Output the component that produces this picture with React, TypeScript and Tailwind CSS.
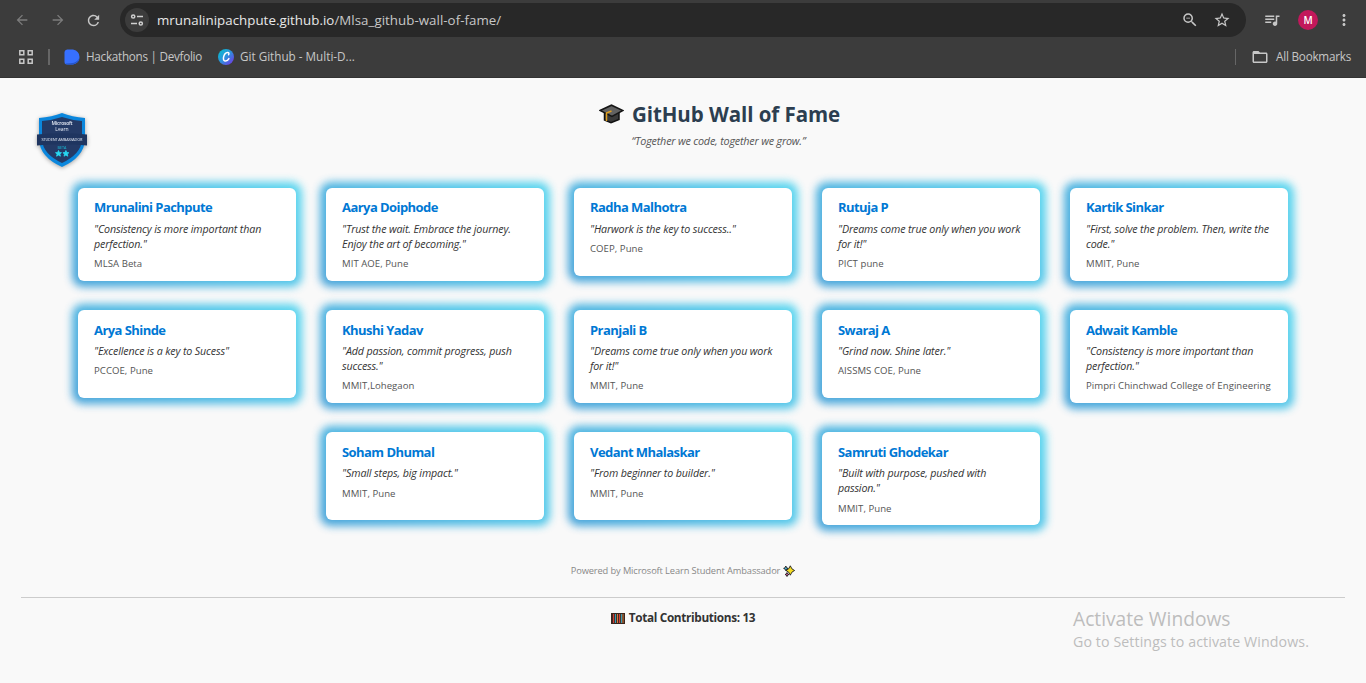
import { MdArrowBack, MdArrowForward, MdRefresh, MdZoomOut, MdStarBorder, MdQueueMusic, MdMoreVert, MdFolderOpen } from "react-icons/md";

type Member = { name: string; quote: string[]; school: string };

const rows: { pad: string; gap: string; schoolGap: string; members: Member[] }[] = [
  {
    pad: "pt-[9.5px]",
    gap: "mt-[6px]",
    schoolGap: "mt-[5px]",
    members: [
      { name: "Mrunalini Pachpute", quote: ['"Consistency is more important than', 'perfection."'], school: "MLSA Beta" },
      { name: "Aarya Doiphode", quote: ['"Trust the wait. Embrace the journey.', 'Enjoy the art of becoming."'], school: "MIT AOE, Pune" },
      { name: "Radha Malhotra", quote: ['"Harwork is the key to success.."'], school: "COEP, Pune" },
      { name: "Rutuja P", quote: ['"Dreams come true only when you work', 'for it!"'], school: "PICT pune" },
      { name: "Kartik Sinkar", quote: ['"First, solve the problem. Then, write the', 'code."'], school: "MMIT, Pune" },
    ],
  },
  {
    pad: "pt-[10.5px]",
    gap: "mt-[5px]",
    schoolGap: "mt-[5px]",
    members: [
      { name: "Arya Shinde", quote: ['"Excellence is a key to Sucess"'], school: "PCCOE, Pune" },
      { name: "Khushi Yadav", quote: ['"Add passion, commit progress, push', 'success."'], school: "MMIT,Lohegaon" },
      { name: "Pranjali B", quote: ['"Dreams come true only when you work', 'for it!"'], school: "MMIT, Pune" },
      { name: "Swaraj A", quote: ['"Grind now. Shine later."'], school: "AISSMS COE, Pune" },
      { name: "Adwait Kamble", quote: ['"Consistency is more important than', 'perfection."'], school: "Pimpri Chinchwad College of Engineering" },
    ],
  },
  {
    pad: "pt-[10.5px]",
    gap: "mt-[5px]",
    schoolGap: "mt-[6px]",
    members: [
      { name: "Soham Dhumal", quote: ['"Small steps, big impact."'], school: "MMIT, Pune" },
      { name: "Vedant Mhalaskar", quote: ['"From beginner to builder."'], school: "MMIT, Pune" },
      { name: "Samruti Ghodekar", quote: ['"Built with purpose, pushed with', 'passion."'], school: "MMIT, Pune" },
    ],
  },
];

function Card({ m, pad, gap, schoolGap }: { m: Member; pad: string; gap: string; schoolGap: string }) {
  const height = m.quote.length > 1 ? "h-[93px]" : "h-[88px]";
  return (
    <div className={`relative w-[218px] ${height}`}>
      <div className="absolute -inset-[6px] rounded-[11px] bg-linear-45 from-[#349ad6] to-[#48d3ef] opacity-90 blur-[4px]" />
      <div className={`relative rounded-md bg-white px-4 whitespace-nowrap ${height} ${pad}`}>
        <h3 className="text-[13px] leading-[18px] font-bold tracking-[-0.56px] text-[#0078d4]">{m.name}</h3>
        <div className={`text-[10.7px] leading-[15px] tracking-[-0.14px] text-[#333] italic ${gap}`}>
          {m.quote.map((q) => (
            <p key={q}>{q}</p>
          ))}
        </div>
        <p className={`text-[9.6px] leading-[14px] tracking-[0.04px] text-[#555] ${schoolGap}`}>{m.school}</p>
      </div>
    </div>
  );
}

function Badge() {
  return (
    <svg width="52" height="58" viewBox="0 0 52 58" className="drop-shadow-[0_1px_2px_rgba(0,0,0,.35)]">
      <path d="M3 6Q16 5 26 1Q36 5 49 6V28Q48 45 26 55Q4 45 3 28Z" fill="#0b87dd" />
      <path d="M6 9Q17 8 26 5Q35 8 46 9V28Q45 42 26 51Q7 42 6 28Z" fill="#243a66" />
      <path d="M1 22.5Q26 20 51 22.5V33.5Q26 31 1 33.5Z" fill="#1f3560" />
      <g fill="#e6ebf5" textAnchor="middle" fontFamily="Open Sans">
        <text x="26" y="13" fontSize="5" fontWeight="600" textLength="21">Microsoft</text>
        <text x="26" y="18.5" fontSize="5">Learn</text>
        <text x="26" y="29" fontSize="3.9" textLength="41">STUDENT AMBASSADOR</text>
        <text x="26" y="37" fontSize="3.7" fill="#18c3dc">BETA</text>
      </g>
      <path d="M22.5 38.5l.9 2 2.1.2-1.6 1.4.5 2.1-1.9-1.1-1.9 1.1.5-2.1-1.6-1.4 2.1-.2zM29.9 38.5l.9 2 2.1.2-1.6 1.4.5 2.1-1.9-1.1-1.9 1.1.5-2.1-1.6-1.4 2.1-.2z" fill="#27d9f2" stroke="#27d9f2" strokeWidth=".8" />
    </svg>
  );
}

function Cap() {
  return (
    <svg width="25" height="20" viewBox="0 0 25 20">
      <path d="M5.5 8.5V16L12 18.8L20 15.5V8.5Z" fill="#3a3a3a" stroke="#111" strokeWidth="1.5" />
      <path d="M1 6.5L12.5 1.2L24 6.5L13 12.5Z" fill="#626262" stroke="#151515" strokeWidth="1.5" />
      <path d="M12.5 7L7.5 9V17" fill="none" stroke="#e0a020" strokeWidth="1.5" />
    </svg>
  );
}

function Browser() {
  return (
    <div className="flex h-[78px] flex-col border-b border-[#333] bg-[#3c3c3c] text-[#c7c7c7]">
      <div className="flex h-10 items-center">
        <MdArrowBack className="ml-[14px] size-4 text-[#7c7c7c]" />
        <MdArrowForward className="ml-[20px] size-4 text-[#7c7c7c]" />
        <MdRefresh className="ml-[19px] size-[17px]" />
        <div className="ml-[18px] flex h-[34px] w-[1126px] items-center rounded-full bg-[#282828] pl-[5px]">
          <div className="flex size-6 items-center justify-center rounded-full bg-[#3c3c3c]">
            <svg width="14" height="14" viewBox="0 0 14 14" fill="none" stroke="#d0d0d0" strokeWidth="1.5">
              <circle cx="3.2" cy="3.5" r="1.6" />
              <path d="M7 3.5h6M1 10.5h6" />
              <circle cx="10.8" cy="10.5" r="1.6" />
            </svg>
          </div>
          <p className="ml-2 flex-1 text-[13.3px] leading-5 tracking-[0.04px] whitespace-nowrap text-[#c7c7c7]">
            <span className="text-[#e8e8e8]">mrunalinipachpute.github.io</span>/Mlsa_github-wall-of-fame/
          </p>
          <MdZoomOut className="size-[18px]" />
          <MdStarBorder className="mr-[15px] ml-[14px] size-[18px]" />
        </div>
        <MdQueueMusic className="ml-[17px] size-[18px]" />
        <div className="ml-[17px] flex size-5 items-center justify-center rounded-full bg-[#c2185b] text-[10px] font-semibold text-white">M</div>
        <MdMoreVert className="ml-[17px] size-[18px]" />
      </div>
      <div className="flex h-[34px] items-center text-[11.7px] whitespace-nowrap">
        <svg width="14" height="14" viewBox="0 0 14 14" fill="none" stroke="currentColor" strokeWidth="1.5" className="ml-[19px]">
          <path d="M.8.8h4v4h-4zM9.2.8h4v4h-4zM.8 9.2h4v4h-4zM9.2 9.2h4v4h-4z" />
        </svg>
        <div className="ml-[15px] h-4 w-[1.5px] bg-[#666]" />
        <svg width="16" height="16" viewBox="0 0 16 16" className="ml-[14px]">
          <path d="M.5 3Q.5 1 3 .5H9Q15.5 2 15.5 8T9 15.5H3Q.5 15.5.5 13Z" fill="#3770ff" />
          <path d="M1 14.5Q6 14.7 10 13.8Q14.5 12 15.3 8.5Q15.5 13.5 9 15.5H3Z" fill="#2454c8" />
        </svg>
        <span className="ml-[6.5px] w-[131.5px] tracking-[-0.27px]">Hackathons | Devfolio</span>
        <svg width="16" height="16" viewBox="0 0 16 16">
          <defs>
            <linearGradient id="cv" x1="0" y1="0" x2="1" y2="1">
              <stop offset="0" stopColor="#00c4cc" />
              <stop offset=".5" stopColor="#2f8fdd" />
              <stop offset="1" stopColor="#7d2ae8" />
            </linearGradient>
          </defs>
          <circle cx="8" cy="8" r="8" fill="url(#cv)" />
          <path d="M10.6 5.8Q11.6 3.5 9.6 3.4Q6.4 3.7 5.5 8.3Q5 12 7.6 12.1Q9.6 12 10.9 9.6" fill="none" stroke="#fff" strokeWidth="1.5" strokeLinecap="round" />
        </svg>
        <span className="ml-[6.5px] flex-1">Git Github - Multi-D...</span>
        <div className="h-4 w-[1.5px] bg-[#666]" />
        <MdFolderOpen className="ml-[15px] size-[18px]" />
        <span className="mr-[15px] ml-[7px] tracking-[-0.23px]">All Bookmarks</span>
      </div>
    </div>
  );
}

export default function App() {
  return (
    <div className="h-[683px] w-[1366px] overflow-hidden bg-[#f9f9f9] font-['Open_Sans','Noto_Sans',sans-serif]">
      <Browser />
      <header className="flex h-[110px] pr-5 pl-9">
        <div className="w-[57px] pt-[34px]">
          <Badge />
        </div>
        <div className="flex flex-1 flex-col items-center pt-[22px]">
          <div className="flex items-center gap-[8px]">
            <Cap />
            <h1 className="text-[20.5px] leading-7 font-bold tracking-[-0.06px] whitespace-nowrap text-[#2c3e50]">GitHub Wall of Fame</h1>
          </div>
          <p className="mt-[5px] mr-[2px] text-[10.8px] leading-4 tracking-[-0.2px] text-[#555] italic">“Together we code, together we grow.”</p>
        </div>
      </header>
      <main className="flex flex-col gap-[29px]">
        {rows.map((r) => (
          <div key={r.members[0].name} className="flex h-[93px] items-start justify-center gap-[30px]">
            {r.members.map((m) => (
              <Card key={m.name} m={m} pad={r.pad} gap={r.gap} schoolGap={r.schoolGap} />
            ))}
          </div>
        ))}
      </main>
      <p className="mt-[38px] flex items-center justify-center gap-[3px] text-[9.3px] leading-4 tracking-[-0.12px] text-[#888]">
        Powered by Microsoft Learn Student Ambassador
        <svg width="12" height="12" viewBox="0 0 12 12" stroke="#1c1c1c" strokeWidth=".9">
          <path d="M4 7.5l.6 1.4 1.4.6-1.4.6L4 11.5l-.6-1.4L2 9.5l1.4-.6z" fill="#df589b" />
          <path d="M2.8 1l.8 1.7 1.6.7-1.6.7-.8 1.6-.7-1.6L.6 3.4l1.5-.7z" fill="#48b8dc" />
          <path d="M7.3.8l1.6 3 2.7 1.7-2.7 1.7-1.6 3-1.6-3L3 5.5l2.7-1.7z" fill="#f5dc22" />
        </svg>
      </p>
      <div className="mx-[21px] mt-[18px] border-t border-[#ccc]" />
      <div className="flex justify-between">
        <div className="w-[293px]" />
        <p className="mt-[10px] flex h-5 items-center gap-1 text-[11.8px] font-bold tracking-[-0.35px] whitespace-nowrap text-[#333]">
          <svg width="14" height="11" viewBox="0 0 14 11">
            <path d="M0 0h14v11H0z" fill="#39251d" />
            <path d="M2.5 1v9M8.5 1v9" stroke="#d0403a" strokeWidth="1.2" />
            <path d="M4.5 1v9M10.5 1v9" stroke="#3a9cb4" strokeWidth="1.2" />
            <path d="M6.5 1v9M12 1v9" stroke="#d97a3a" strokeWidth="1" />
          </svg>
          Total Contributions: 13
        </p>
        <div className="mt-[8px] w-[293px] whitespace-nowrap text-[#bdbdbd]">
          <p className="text-[19.2px] leading-[26px]">Activate Windows</p>
          <p className="text-[14.2px] leading-5 tracking-[0.1px]">Go to Settings to activate Windows.</p>
        </div>
      </div>
    </div>
  );
}
